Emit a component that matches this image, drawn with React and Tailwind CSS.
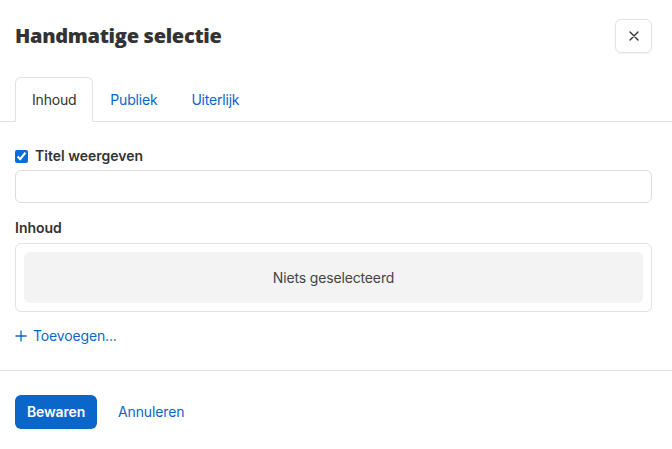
import React, { useState } from 'react';

function App() {
  const [showTitle, setShowTitle] = useState(true);
  const [tab, setTab] = useState('inhoud');

  const tabs = [
    { id: 'inhoud', label: 'Inhoud' },
    { id: 'publiek', label: 'Publiek' },
    { id: 'uiterlijk', label: 'Uiterlijk' },
  ];

  return (
    <div className="w-[672px] h-[449px] bg-white text-[#333] font-['Inter','Liberation_Sans',sans-serif] overflow-hidden">
      <div className="flex items-center justify-between pt-[19px] pl-[15px] pr-[20px]">
        <h3 className="text-[20px] font-extrabold tracking-[-0.3px] font-['Open_Sans','Inter',sans-serif] text-[#333]">
          Handmatige selectie
        </h3>
        <button
          type="button"
          className="w-[37px] h-[34px] flex items-center justify-center rounded-md border border-[#e2e2e2] shadow-[0_1px_2px_rgba(0,0,0,0.06)] text-[#333]"
        >
          <svg width="10" height="10" viewBox="0 0 10 10" fill="none" stroke="currentColor" strokeWidth="1.4" strokeLinecap="round">
            <path d="M1 1L9 9M9 1L1 9" />
          </svg>
        </button>
      </div>

      <div className="mt-[24px] flex items-end pl-[15px] border-b border-[#e2e2e2] h-[45px]">
        {tabs.map((t) => (
          <button
            key={t.id}
            type="button"
            onClick={() => setTab(t.id)}
            className={
              t.id === tab
                ? 'h-[45px] -mb-px px-4 text-sm tracking-[-0.2px] rounded-t-md border border-[#e2e2e2] border-b-white bg-white text-[#333]'
                : 'h-[45px] -mb-px px-[16px] text-sm tracking-[-0.2px] text-[#0b66c9] border border-transparent'
            }
          >
            {t.label}
          </button>
        ))}
      </div>

      <div className="pl-[15px] pr-[20px] pt-[24px]">
        <label className="flex items-center gap-[7px] text-sm font-semibold text-[#333]">
          <input
            type="checkbox"
            checked={showTitle}
            onChange={(e) => setShowTitle(e.target.checked)}
            className="w-[13px] h-[13px] accent-[#0b6bdc] m-0"
          />
          Titel weergeven
        </label>
        <input
          type="text"
          className="mt-[4px] w-full h-[33px] rounded-md border border-[#dcdcdc] px-3 text-sm outline-none"
        />

        <div className="mt-[15px] text-sm font-semibold text-[#333]">Inhoud</div>
        <div className="mt-[5px] rounded-md border border-[#e2e2e2] p-2">
          <div className="h-[51px] rounded-md bg-[#f3f3f3] flex items-center justify-center text-sm tracking-[-0.15px] text-[#444]">
            Niets geselecteerd
          </div>
        </div>

        <button type="button" className="mt-[14px] flex items-center gap-[6px] text-sm tracking-[-0.15px] text-[#0b66c9]">
          <svg width="12" height="12" viewBox="0 0 12 12" fill="none" stroke="currentColor" strokeWidth="1.3">
            <path d="M6 0.5V11.5M0.5 6H11.5" />
          </svg>
          Toevoegen...
        </button>
      </div>

      <div className="mt-[24px] border-t border-[#e2e2e2] px-[15px] pt-[24px] flex items-center gap-[21px]">
        <button type="button" className="h-[34px] px-[12px] rounded-md bg-[#0b66c9] text-white text-sm font-semibold tracking-[-0.15px]">
          Bewaren
        </button>
        <button type="button" className="text-sm tracking-[-0.15px] text-[#0b66c9]">
          Annuleren
        </button>
      </div>
    </div>
  );
}

export default App;
